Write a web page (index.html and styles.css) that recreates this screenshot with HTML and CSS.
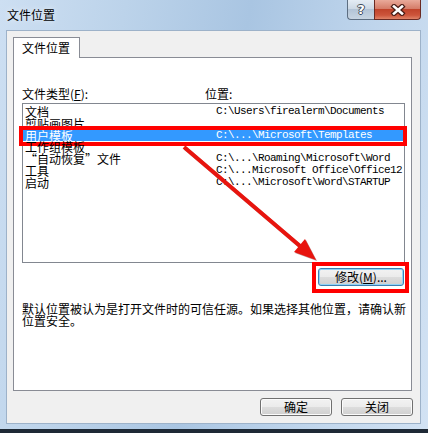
FILE: index.html
```html
<!DOCTYPE html>
<html lang="zh-CN">
  <head>
    <meta charset="UTF-8" />
    <title>文件位置</title>
    <link rel="stylesheet" href="styles.css">
  </head>
  <body>
    <div class="window">
      <header class="titlebar">
        <span class="title">文件位置</span>
        <div class="caption">
          <span class="cap-btn help">?</span>
          <span class="cap-btn close">
            <svg width="16" height="12" viewBox="0 0 16 12">
              <path d="M4 2.5 L12 9.5 M12 2.5 L4 9.5" stroke="#4a1d16" stroke-width="5" stroke-linecap="square" fill="none"/>
              <path d="M4 2.5 L12 9.5 M12 2.5 L4 9.5" stroke="#ffffff" stroke-width="2.6" stroke-linecap="square" fill="none"/>
            </svg>
          </span>
        </div>
      </header>
      <main class="client">
        <div class="tabs">
          <span class="tab">文件位置</span>
        </div>
        <section class="panel">
          <div class="labels">
            <span class="col-type">文件类型(<u>F</u>):</span>
            <span class="col-path">位置:</span>
          </div>
          <!-- 목록 -->
          <ul class="list">
            <li><span class="name">文档</span><span class="path">C:\Users\firealerm\Documents</span></li>
            <li><span class="name">剪贴画图片</span><span class="path"></span></li>
            <li class="selected marked"><span class="name">用户模板</span><span class="path">C:\...\Microsoft\Templates</span></li>
            <li><span class="name">工作组模板</span><span class="path"></span></li>
            <li><span class="name">“自动恢复”文件</span><span class="path">C:\...\Roaming\Microsoft\Word</span></li>
            <li><span class="name">工具</span><span class="path">C:\...Microsoft Office\Office12</span></li>
            <li><span class="name">启动</span><span class="path">C:\...\Microsoft\Word\STARTUP</span></li>
          </ul>
          <div class="modify-row">
            <span class="mark-box">
              <button class="btn default">修改(<u>M</u>)...</button>
            </span>
          </div>
          <p class="note">默认位置被认为是打开文件时的可信任源。如果选择其他位置，请确认新位置安全。</p>
        </section>
        <footer class="actions">
          <button class="btn">确定</button>
          <button class="btn">关闭</button>
        </footer>
      </main>
      <!-- 빨간 화살표 -->
      <svg class="arrow" width="428" height="433" viewBox="0 0 428 433">
        <line x1="184" y1="147" x2="300" y2="246" stroke="#e8140e" stroke-width="4" />
        <polygon points="316,260 294,252 305,239" fill="#e8140e" />
      </svg>
    </div>
  </body>
</html>
```

FILE: styles.css
```css
* {
  box-sizing: border-box;
}
ul {
  list-style: none;
  margin: 0;
  padding: 0;
}
body {
  margin: 0;
  background: #1e2935;
  font-family: "Noto Sans CJK SC", sans-serif;
  font-size: 12px;
  color: #000;
}

.window {
  position: relative;
  width: 428px;
  height: 429px;
  display: flex;
  flex-direction: column;
  background: linear-gradient(100deg, #cddff2 0%, #bcd3ea 25%, #a9c5e2 50%, #bfd5ec 75%, #d2e2f3 100%);
}
.titlebar {
  height: 30px;
  display: flex;
  justify-content: space-between;
  align-items: flex-start;
}
.title {
  padding: 8px 0 0 7px;
  line-height: 14px;
  text-shadow: 0 0 6px rgba(255, 255, 255, 0.8);
}
.caption {
  display: flex;
  margin-right: 7px;
}
.cap-btn {
  height: 20px;
  display: flex;
  align-items: center;
  justify-content: center;
}
.cap-btn.help {
  width: 27px;
  border: 1px solid #5d6e81;
  border-top: 0;
  border-right: 0;
  border-radius: 0 0 0 4px;
  background: linear-gradient(#e4ecf4, #cdd9e5 45%, #b3c4d6 50%, #c8d5e2);
  color: #fff;
  font-family: "DejaVu Sans", sans-serif;
  font-weight: bold;
  font-size: 13px;
  text-shadow: 1px 0 #3d4a58, -1px 0 #3d4a58, 0 1px #3d4a58, 0 -1px #3d4a58;
}
.cap-btn.close {
  width: 47px;
  border: 1px solid #6a2a22;
  border-top: 0;
  border-radius: 0 0 4px 0;
  background: linear-gradient(#e9aa9a, #d57d69 45%, #c1442b 50%, #cd553b 80%, #e08468);
}

.client {
  flex: 1;
  margin: 0 7px 5px 6px;
  border: 1px solid #9db2c9;
  background: #f0f0f0;
  padding: 6px 8px 0 6px;
  display: flex;
  flex-direction: column;
}
.tabs {
  display: flex;
}
.tab {
  height: 21px;
  line-height: 20px;
  padding: 0 9px 0 8px;
  border: 1px solid #898c95;
  border-bottom: 0;
  background: #fff;
  margin-bottom: -1px;
  position: relative;
  z-index: 1;
}
.panel {
  width: 399px;
  height: 334px;
  border: 1px solid #898c95;
  background: #fff;
  padding: 29px 6px 0 8px;
}
.labels {
  display: flex;
  height: 14px;
  line-height: 14px;
  margin-bottom: 2px;
}
.col-type {
  width: 183px;
}

.list {
  height: 160px;
  border: 1px solid #828790;
  padding-top: 2px;
}
.list li {
  display: flex;
  height: 11.75px;
  line-height: 11.75px;
  white-space: nowrap;
  position: relative;
}
.list .name {
  width: 193px;
  padding-left: 2px;
}
.list .path {
  font-family: "Liberation Mono", monospace;
  font-size: 11px;
  letter-spacing: -0.6px;
}
.list li.selected {
  background: #3399ff;
  color: #fff;
}
.list li.marked::after {
  content: "";
  position: absolute;
  top: -3.5px;
  bottom: -4.75px;
  left: -4px;
  right: -3px;
  border: 4px solid #f00;
}

.modify-row {
  display: flex;
  justify-content: flex-end;
  margin-top: 5px;
  padding-right: 1px;
}
.mark-box {
  position: relative;
  display: flex;
}
.mark-box::after {
  content: "";
  position: absolute;
  top: -6px;
  bottom: -7px;
  left: -6px;
  right: -5px;
  border: 4px solid #f00;
}

.btn {
  height: 18px;
  width: 72px;
  padding: 0;
  border: 1px solid #707070;
  border-radius: 3px;
  background: linear-gradient(#f2f2f2, #ebebeb 50%, #dddddd 50%, #cfcfcf);
  box-shadow: inset 0 0 0 1px #fbfbfb;
  font-family: "Noto Sans CJK SC", sans-serif;
  font-size: 12px;
  line-height: 16px;
  color: #000;
}
.btn.default {
  width: 86px;
  border-color: #3c7fb1;
  box-shadow: inset 0 0 0 1px #8fd3f7;
}
.note {
  margin: 17px 0 0;
  width: 386px;
  line-height: 12px;
}

.actions {
  display: flex;
  justify-content: flex-end;
  gap: 9px;
  margin-top: 7px;
  margin-right: -1px;
}

.arrow {
  position: absolute;
  left: 0;
  top: 0;
  pointer-events: none;
  filter: drop-shadow(1px 1px 0 rgba(120, 0, 0, 0.45));
}
```
